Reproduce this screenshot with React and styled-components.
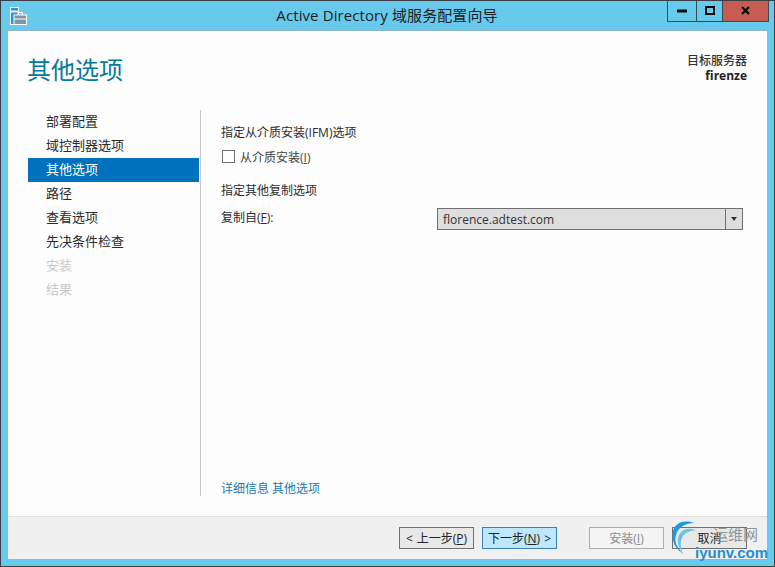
import styled, { createGlobalStyle } from "styled-components";

const GlobalStyle = createGlobalStyle`
  html, body {
    margin: 0;
    padding: 0;
    background: #67caec;
  }
  body {
    font-family: "Open Sans", "Noto Sans CJK SC", sans-serif;
    font-size: 12px;
    color: #2b2b2b;
  }
`;

const steps = [
  { label: "部署配置" },
  { label: "域控制器选项" },
  { label: "其他选项", active: true },
  { label: "路径" },
  { label: "查看选项" },
  { label: "先决条件检查" },
  { label: "安装", disabled: true },
  { label: "结果", disabled: true },
];

const Window = styled.div`
  position: relative;
  width: 775px;
  height: 567px;
  box-sizing: border-box;
  border: 1px solid #3a3f44;
  background: #67caec;
  display: flex;
  flex-direction: column;
  overflow: hidden;
`;

const TitleBar = styled.div`
  position: relative;
  height: 29px;
  flex: none;
  display: flex;
  align-items: center;
  justify-content: center;
`;

const AppIcon = styled.svg`
  position: absolute;
  left: 9px;
  top: 6px;
`;

const TitleText = styled.div`
  font-size: 15px;
  letter-spacing: 0.1px;
  color: #1c1c1c;
  margin-top: -2px;
  margin-right: 1px;
`;

const Controls = styled.div`
  position: absolute;
  top: -1px;
  right: 5px;
  display: flex;
  height: 22px;
  border: 1px solid #3d4a54;
  border-top: 0;
  box-sizing: border-box;
`;

const ControlButton = styled.div`
  width: ${(p) => p.$w}px;
  display: flex;
  align-items: center;
  justify-content: center;
  background: ${(p) => (p.$close ? "#c75c52" : "transparent")};
  border-left: ${(p) => (p.$first ? "0" : "1px solid #3d4a54")};
`;

const Client = styled.div`
  flex: 1;
  margin: 0 7px 7px;
  background: #fdfdfd;
  display: flex;
  flex-direction: column;
  min-height: 0;
  border-top: 1px solid #8fb4c6;
`;

const Header = styled.div`
  height: 79px;
  flex: none;
  padding: 0 20px;
  display: flex;
  justify-content: space-between;
  align-items: flex-start;
`;

const PageTitle = styled.h1`
  margin: 21px 0 0 -1px;
  font-size: 24px;
  line-height: 36px;
  font-weight: 400;
  color: #05799b;
`;

const ServerInfo = styled.div`
  margin-top: 22px;
  text-align: right;
  line-height: 15px;
  color: #333;
  font-weight: 500;
  b {
    display: block;
    font-weight: 700;
    color: #222;
  }
`;

const Body = styled.div`
  flex: 1;
  display: flex;
  padding-left: 20px;
  min-height: 0;
  margin-bottom: 20px;
`;

const Nav = styled.ul`
  list-style: none;
  margin: 0;
  padding: 0;
  width: 171px;
  flex: none;
`;

const NavItem = styled.li`
  height: 24px;
  line-height: 23px;
  padding-left: 18px;
  font-size: 13px;
  background: ${(p) => (p.$active ? "#0071bc" : "transparent")};
  color: ${(p) => (p.$active ? "#fff" : p.$disabled ? "#c9c9c9" : "#2b2b2b")};
`;

const Panel = styled.div`
  flex: 1;
  margin-left: 1px;
  border-left: 1px solid #c8c8c8;
  padding: 14px 24px 0 20px;
  display: flex;
  flex-direction: column;
`;

const SectionLabel = styled.div`
  line-height: 17px;
`;

const CheckRow = styled.label`
  display: flex;
  align-items: center;
  gap: 5px;
  margin: 7px 0 0 1px;
  height: 17px;
  color: #444;
`;

const CheckBox = styled.span`
  width: 11px;
  height: 11px;
  border: 1px solid #707070;
  background: #fff;
  flex: none;
`;

const SpacedLabel = styled(SectionLabel)`
  margin-top: 17px;
`;

const FormRow = styled.div`
  display: flex;
  align-items: center;
  justify-content: space-between;
  margin-top: 9px;
`;

const FieldLabel = styled.span`
  margin-bottom: 4px;
`;

const Select = styled.div`
  width: 306px;
  height: 22px;
  box-sizing: border-box;
  border: 1px solid #707070;
  background: #dedede;
  display: flex;
  align-items: center;
  font-size: 12px;
`;

const SelectValue = styled.div`
  flex: 1;
  padding-left: 5px;
  color: #333;
`;

const SelectArrow = styled.div`
  width: 16px;
  height: 100%;
  border-left: 1px solid #707070;
  display: flex;
  align-items: center;
  justify-content: center;
  &::after {
    content: "";
    border-left: 3.5px solid transparent;
    border-right: 3.5px solid transparent;
    border-top: 4px solid #333;
  }
`;

const MoreLink = styled.a`
  margin-top: auto;
  color: #1a79b8;
  line-height: 15px;
`;

const Footer = styled.div`
  height: 43px;
  flex: none;
  box-sizing: border-box;
  background: #f0f0f0;
  border-top: 1px solid #dfdfdf;
  display: flex;
  align-items: center;
  justify-content: flex-end;
  padding: 0 20px 0 0;
  gap: 8px;
`;

const Button = styled.div`
  width: 75px;
  height: 22px;
  box-sizing: border-box;
  display: flex;
  align-items: center;
  justify-content: center;
  gap: 4px;
  border: 1px solid ${(p) => (p.$primary ? "#3c7fb1" : p.$disabled ? "#adadad" : "#707070")};
  background: ${(p) => (p.$primary ? "#bee6fd" : p.$disabled ? "#f4f4f4" : "#e8e8e8")};
  color: ${(p) => (p.$disabled ? "#8a8a8a" : "#222")};
  margin-left: ${(p) => p.$gap || 0}px;
  u {
    text-underline-offset: 1px;
  }
`;

const Watermark = styled.div`
  position: absolute;
  left: 667px;
  top: 517px;
  width: 107px;
  height: 48px;
  pointer-events: none;
`;

const WatermarkArcs = styled.svg`
  position: absolute;
  left: 0;
  top: 0;
`;

const WatermarkCn = styled.span`
  position: absolute;
  left: 45px;
  top: 8px;
  font-size: 15px;
  line-height: 17px;
  color: #8d979c;
`;

const WatermarkEn = styled.span`
  position: absolute;
  left: 27px;
  top: 27px;
  font-family: "Liberation Sans", sans-serif;
  font-size: 15px;
  line-height: 16px;
  font-weight: 700;
  color: #1f8fd0;
`;

const ServerIcon = () => (
  <AppIcon width="17" height="18" viewBox="0 0 17 18">
    <rect x="0.5" y="0.5" width="8" height="3.5" fill="#2f8fd8" stroke="#fff" />
    <rect x="0.5" y="5" width="8" height="12.5" fill="#2f8fd8" stroke="#fff" />
    <rect x="4" y="8" width="12.5" height="9.5" fill="#7c95a8" stroke="#fff" />
    <path d="M8 8V5.5h4.5V8" fill="none" stroke="#fff" />
    <path d="M4 12h12.5" stroke="#fff" />
  </AppIcon>
);

const App = () => (
  <Window>
    <GlobalStyle />
    <TitleBar>
      <ServerIcon />
      <TitleText>Active Directory 域服务配置向导</TitleText>
      <Controls>
        <ControlButton $w={28} $first>
          <svg width="10" height="4" viewBox="0 0 10 4">
            <rect width="10" height="3" y="0.5" fill="#0a0a0a" />
          </svg>
        </ControlButton>
        <ControlButton $w={25}>
          <svg width="10" height="9" viewBox="0 0 10 9">
            <rect x="1" y="1" width="8" height="7" fill="none" stroke="#0a0a0a" strokeWidth="2" />
          </svg>
        </ControlButton>
        <ControlButton $w={45} $close>
          <svg width="9" height="9" viewBox="0 0 9 9">
            <path d="M1 1l7 7M8 1L1 8" stroke="#0a0a0a" strokeWidth="2.2" />
          </svg>
        </ControlButton>
      </Controls>
    </TitleBar>
    <Client>
      <Header>
        <PageTitle>其他选项</PageTitle>
        <ServerInfo>
          目标服务器
          <b>firenze</b>
        </ServerInfo>
      </Header>
      <Body>
        <Nav>
          {steps.map((s) => (
            <NavItem key={s.label} $active={s.active} $disabled={s.disabled}>
              {s.label}
            </NavItem>
          ))}
        </Nav>
        <Panel>
          <SectionLabel>指定从介质安装(IFM)选项</SectionLabel>
          <CheckRow>
            <CheckBox />
            <span>
              从介质安装(<u>I</u>)
            </span>
          </CheckRow>
          <SpacedLabel>指定其他复制选项</SpacedLabel>
          <FormRow>
            <FieldLabel>
              复制自(<u>F</u>):
            </FieldLabel>
            <Select>
              <SelectValue>florence.adtest.com</SelectValue>
              <SelectArrow />
            </Select>
          </FormRow>
          <MoreLink>详细信息 其他选项</MoreLink>
        </Panel>
      </Body>
      <Footer>
        <Button>
          <span>&lt;</span>
          <span>
            上一步(<u>P</u>)
          </span>
        </Button>
        <Button $primary>
          <span>
            下一步(<u>N</u>)
          </span>
          <span>&gt;</span>
        </Button>
        <Button $disabled $gap={24}>
          <span>
            安装(<u>I</u>)
          </span>
        </Button>
        <Button>取消</Button>
      </Footer>
    </Client>
    <Watermark>
      <WatermarkArcs width="40" height="42" viewBox="0 0 40 42">
        <path d="M26 5C12 0 2 8 5 22C6 28 10 32 15 36C9 29 6 24 8 17C10 9 18 5 26 5Z" fill="#1f9ad6" />
        <path d="M28 13C20 8 12 12 10 20C9 26 12 31 15 36C12 28 12 22 15 18C18 14 23 12 28 13Z" fill="#6fc0e6" />
      </WatermarkArcs>
      <WatermarkCn>运维网</WatermarkCn>
      <WatermarkEn>iyunv.com</WatermarkEn>
    </Watermark>
  </Window>
);

export default App;
